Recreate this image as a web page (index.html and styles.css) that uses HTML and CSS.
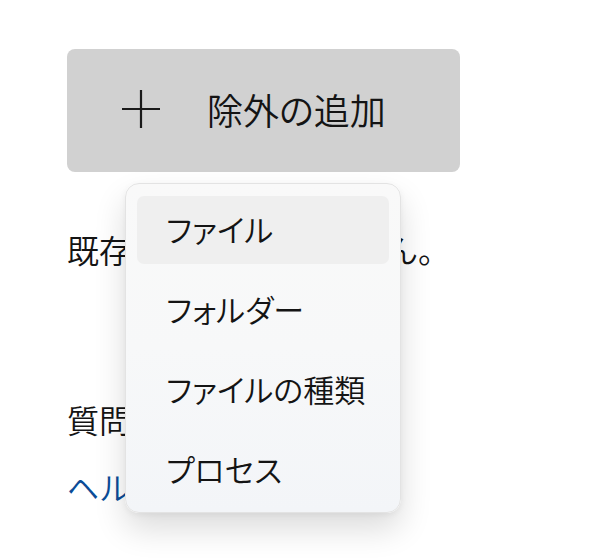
FILE: index.html
```html
<!DOCTYPE html>
<html lang="ja">
<head>
<meta charset="utf-8">
<title>除外の追加</title>
<link rel="stylesheet" href="styles.css">
</head>
<body>
<div class="page">
  <div class="add-button">
    <svg class="plus" width="38" height="38" viewBox="0 0 38 38" aria-hidden="true">
      <path d="M19 0V38M0 19H38" stroke="#1a1a1a" stroke-width="2.2" fill="none"/>
    </svg>
    <span class="add-label">除外の追加</span>
  </div>
  <p class="empty">既存の除外はありません。</p>
  <p class="question">質問がありますか?</p>
  <a class="help" href="#">ヘルプを表示</a>

  <div class="menu">
    <div class="menu-item hover">ファイル</div>
    <div class="menu-item">フォルダー</div>
    <div class="menu-item">ファイルの種類</div>
    <div class="menu-item">プロセス</div>
  </div>
</div>
</body>
</html>
```

FILE: styles.css
```css
html, body {
  margin: 0;
  padding: 0;
  background: #ffffff;
}

body {
  font-family: "Noto Sans CJK JP", "Noto Sans", sans-serif;
  font-weight: 350;
  color: #141414;
}

.page {
  position: relative;
  padding: 49px 0 0 67px;
  height: 558px;
  box-sizing: border-box;
}

.add-button {
  width: 393px;
  height: 123px;
  background: #d1d1d1;
  border-radius: 8px;
  display: flex;
  align-items: center;
  box-sizing: border-box;
  padding-left: 55px;
}

.plus {
  display: block;
  flex: none;
  margin-top: -3px;
}

.add-label {
  margin-left: 47px;
  font-size: 36px;
  line-height: 1;
  color: #141414;
  margin-top: -3px;
  font-feature-settings: "palt";
}

.empty {
  margin: 55px 0 0 0;
  font-size: 32px;
  line-height: 45px;
}

.question {
  margin: 125px 0 0 0;
  font-size: 32px;
  line-height: 45px;
}

.help {
  display: block;
  margin-top: 22px;
  font-size: 32px;
  line-height: 45px;
  color: #0b4c97;
  text-decoration: none;
}

.menu {
  position: absolute;
  left: 125px;
  top: 183px;
  width: 276px;
  height: 330px;
  box-sizing: border-box;
  border: 1px solid #e3e3e3;
  border-radius: 14px;
  background: linear-gradient(180deg, #f9f9f9 0%, #f7f8f9 50%, #f3f5f8 100%);
  box-shadow: 0 16px 32px rgba(0, 0, 0, 0.14), 0 2px 6px rgba(0, 0, 0, 0.05);
  padding: 6px 11px;
  display: flex;
  flex-direction: column;
  gap: 12px;
}

.menu-item {
  height: 68px;
  flex: none;
  border-radius: 7px;
  display: flex;
  align-items: center;
  padding-left: 29px;
  padding-bottom: 3px;
  box-sizing: border-box;
  font-size: 31px;
  color: #141414;
  font-feature-settings: "palt";
}

.menu-item:first-child {
  margin-top: 6px;
}

.menu-item.hover {
  background: #efefef;
}
```
